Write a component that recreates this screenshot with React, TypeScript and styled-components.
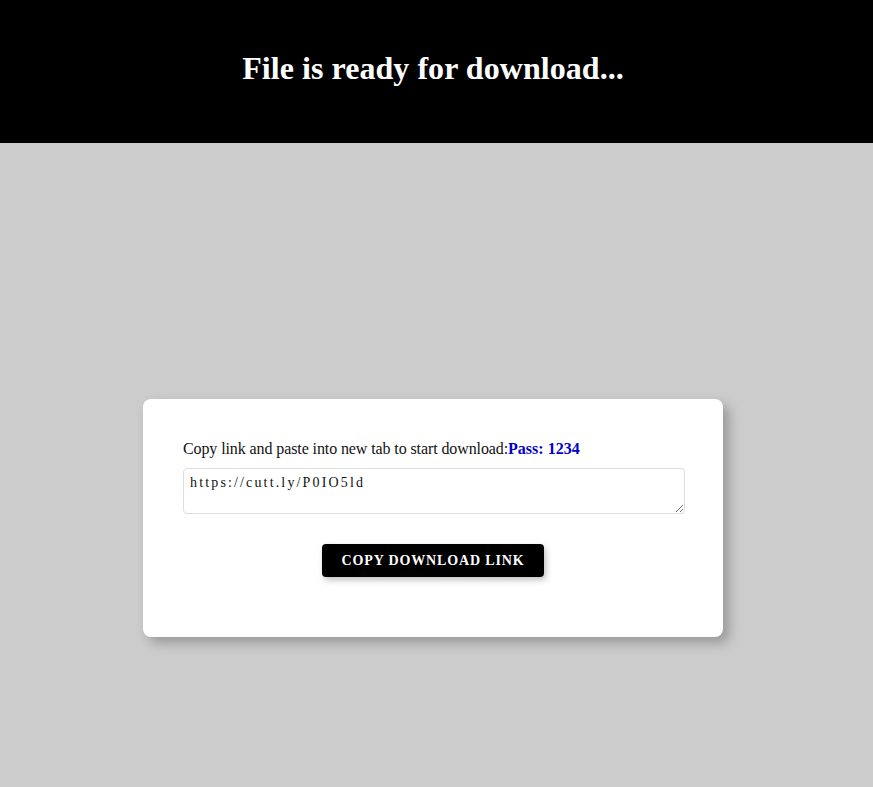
import React from "react";
import styled, { createGlobalStyle } from "styled-components";

const Global = createGlobalStyle`
  html, body { margin: 0; padding: 0; }
  body { background: #cccccc; font-family: "Liberation Serif", "Times New Roman", serif; }
`;

const Header = styled.header`
  background: #000;
  height: 143px;
  display: flex;
  justify-content: center;
  align-items: center;
  box-sizing: border-box;
  padding: 0 7px 6px 0;
`;

const Title = styled.h1`
  margin: 0;
  color: #fff;
  font-family: "Liberation Serif", "Times New Roman", serif;
  font-weight: bold;
  font-size: 32px;
  letter-spacing: 0.05px;
`;

const Main = styled.main`
  display: flex;
  justify-content: center;
  padding: 256px 7px 150px 0;
`;

const Card = styled.div`
  width: 580px;
  height: 238px;
  box-sizing: border-box;
  background: #fff;
  border-radius: 8px;
  padding: 41px 38px 0 40px;
  box-shadow: 6px 6px 12px rgba(0, 0, 0, 0.25);
`;

const Label = styled.p`
  margin: 0;
  font-size: 16px;
  line-height: 18px;
  color: #111;
  letter-spacing: -0.1px;
`;

const Pass = styled.span`
  color: #0000cc;
  font-weight: bold;
  letter-spacing: 0;
`;

const LinkBox = styled.textarea`
  display: block;
  margin-top: 10px;
  width: 502px;
  height: 46px;
  box-sizing: border-box;
  border: 1px solid #dddddd;
  border-radius: 4px;
  padding: 6px 6px;
  font-family: "Liberation Serif", "Times New Roman", serif;
  font-size: 14px;
  letter-spacing: 2.15px;
  color: #111;
  resize: vertical;
  outline: none;
`;

const ButtonRow = styled.div`
  display: flex;
  justify-content: center;
  margin-top: 30px;
  padding-right: 2px;
`;

const CopyButton = styled.button`
  width: 222px;
  height: 33px;
  background: #000;
  color: #fff;
  border: none;
  border-radius: 4px;
  font-family: "Liberation Serif", "Times New Roman", serif;
  font-weight: bold;
  font-size: 14px;
  letter-spacing: 0.85px;
  text-transform: uppercase;
  box-shadow: 2px 3px 6px rgba(0, 0, 0, 0.25);
  cursor: pointer;
`;

export default function App() {
  return (
    <>
      <Global />
      <Header>
        <Title>File is ready for download...</Title>
      </Header>
      <Main>
        <Card>
          <Label>
            Copy link and paste into new tab to start download:<Pass>Pass: 1234</Pass>
          </Label>
          <LinkBox readOnly defaultValue="https://cutt.ly/P0IO5ld" />
          <ButtonRow>
            <CopyButton>Copy download link</CopyButton>
          </ButtonRow>
        </Card>
      </Main>
    </>
  );
}
